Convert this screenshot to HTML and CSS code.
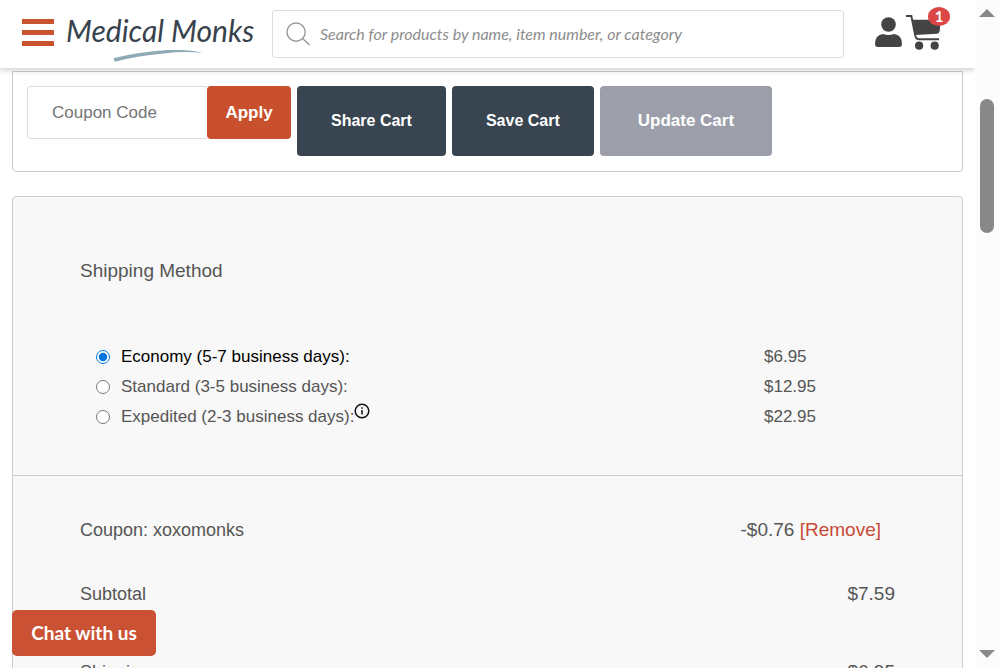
FILE: index.html
```html
<!DOCTYPE html>
<html lang="en">
<head>
<meta charset="utf-8">
<title>Cart - Medical Monks</title>
<link rel="stylesheet" href="styles.css">
</head>
<body>
<div class="page">
  <header class="header">
    <button class="menu" type="button" aria-label="Menu"><span></span><span></span><span></span></button>
    <a class="logo" href="#">
      <span class="logo-text">Medical Monks</span>
      <svg class="logo-swoosh" viewBox="0 0 90 12" aria-hidden="true"><path d="M0 8Q24 2 54 0Q74 -1 89 3Q70 1 50 3.500Q22 6 2 11.500Q-1 11 0 8Z"/></svg>
    </a>
    <form class="search">
      <svg viewBox="0 0 26 26" aria-hidden="true"><circle cx="10.5" cy="10.5" r="9.5"/><path d="M17 17l7.5 7"/></svg>
      <input type="search" aria-label="Search products" placeholder="Search for products by name, item number, or category">
    </form>
    <nav class="account">
      <a href="#" aria-label="Account"><svg class="user" viewBox="0 0 27 31"><circle cx="13.5" cy="7.5" r="7.3"/><path d="M8 17Q13.500 19 19 17Q27 18 27 27Q27 30 24 30H3Q0 30 0 27Q0 18 8 17Z"/></svg></a>
      <a class="cart" href="#" aria-label="Cart"><svg viewBox="0 0 36 36"><path class="line" d="M0 1H5.500L9.500 21Q10.500 25 13.500 25H34"/><path d="M7 5H36L34.500 17Q34 19 32 19.200L9.500 20.500Z"/><circle cx="13.500" cy="31.500" r="4.200"/><circle cx="29.500" cy="31.500" r="4.200"/></svg><span class="badge">1</span></a>
    </nav>
  </header>
  <main class="content">
    <section class="card actions">
      <form class="coupon">
        <input type="text" aria-label="Coupon Code" placeholder="Coupon Code">
        <button class="apply" type="button">Apply</button>
      </form>
      <button class="action" type="button">Share Cart</button>
      <button class="action" type="button">Save Cart</button>
      <button class="action update" type="button" disabled>Update Cart</button>
    </section>
    <section class="card totals">
      <div class="shipping">
        <h2>Shipping Method</h2>
        <ul class="methods">
          <li><input type="radio" name="ship" id="economy" checked><label for="economy">Economy (5-7 business days):</label><span class="price">$6.95</span></li>
          <li><input type="radio" name="ship" id="standard"><label for="standard">Standard (3-5 business days):</label><span class="price">$12.95</span></li>
          <li><input type="radio" name="ship" id="expedited"><label for="expedited">Expedited (2-3 business days):</label><svg class="info" viewBox="0 0 16 16" aria-hidden="true"><circle cx="8" cy="8" r="6.800"/><path d="M8 7V11.500M8 4.300V5.800"/></svg><span class="price">$22.95</span></li>
        </ul>
      </div>
      <dl class="summary">
        <div class="row discount"><dt>Coupon: xoxomonks</dt><dd>-$0.76 <a href="#">[Remove]</a></dd></div>
        <div class="row"><dt>Subtotal</dt><dd>$7.59</dd></div>
        <div class="row last"><dt>Shipping</dt><dd>$6.95</dd></div>
      </dl>
    </section>
  </main>
</div>
<div class="scrollbar" aria-hidden="true"><i class="up"></i><i class="thumb"></i><i class="down"></i></div>
<button class="chat" type="button">Chat with us</button>
</body>
</html>
```
FILE: styles.css
```css
* { box-sizing: border-box; }
body {
  margin: 0;
  height: 100vh;
  overflow: hidden;
  display: flex;
  background: #fff;
  color: #555;
  font: 18px/24px "Liberation Sans", sans-serif;
}
button, input { font: inherit; }
button { border: 0; cursor: pointer; }
a { color: inherit; text-decoration: none; }
.page { flex: 1; min-width: 0; overflow: hidden; }
.header {
  position: relative;
  z-index: 1;
  display: flex;
  align-items: center;
  height: 68px;
  padding: 0 24px 0 22px;
  background: #fff;
  box-shadow: 0 2px 6px rgba(0, 0, 0, .2);
}
.menu {
  display: flex;
  flex-direction: column;
  gap: 6px;
  width: 32px;
  padding: 0;
  margin: 0 12px 4px 0;
  background: none;
}
.menu span { height: 5px; background: #c9532f; }
.logo { position: relative; width: 206px; margin-bottom: 8px; color: #37424c; }
.logo-text { font: italic 30px/40px Lato, sans-serif; white-space: nowrap; }
.logo-swoosh { position: absolute; left: 48px; top: 40px; width: 90px; fill: #8eaab6; }
.search {
  flex: 1;
  display: flex;
  align-items: center;
  height: 48px;
  padding: 0 13px;
  gap: 9px;
  border: 1px solid #ddd;
  border-radius: 3px;
}
.search svg { width: 25px; flex: none; fill: none; stroke: #999; stroke-width: 1.5; }
.search input {
  flex: 1;
  min-width: 0;
  padding: 0;
  border: 0;
  outline: 0;
  background: none;
  font: italic 16px/24px Lato, sans-serif;
}
.search input::placeholder { color: #8c8c8c; opacity: 1; }
.account { display: flex; align-items: center; gap: 4px; margin: 0 1px 4px 31px; color: #444; }
.account a { display: block; }
.account svg { display: block; fill: currentColor; }
.user { width: 27px; }
.cart { position: relative; width: 44px; }
.cart svg { width: 35px; }
.cart .line { fill: none; stroke: currentColor; stroke-width: 2; }
.badge {
  position: absolute;
  right: 0;
  top: -8px;
  width: 22px;
  height: 19px;
  border-radius: 50%;
  background: #dc4646;
  color: #fff;
  font: bold 15px/19px Lato, sans-serif;
  text-align: center;
}
.content { padding: 3px 12px 0; }
.card { border: 1px solid #ccc; border-radius: 4px; }
.actions {
  display: flex;
  align-items: flex-start;
  gap: 6px;
  padding: 14px;
  height: 101px;
  border-radius: 0 0 4px 4px;
}
.coupon { display: flex; height: 53px; }
.coupon input {
  width: 180px;
  padding: 0 24px;
  border: 1px solid #ddd;
  border-right: 0;
  border-radius: 4px 0 0 4px;
  font-size: 17px;
}
.coupon input::placeholder { color: #757575; }
.apply, .action {
  border-radius: 4px;
  color: #fff;
  font: bold 17px/24px "Liberation Sans", sans-serif;
}
.apply { width: 84px; background: #c9502d; }
.action { height: 70px; padding: 0 34px; background: #38444f; font-size: 16px; }
.update { padding: 0 38px; background: #9c9faa; font-size: 17px; }
.totals { margin-top: 24px; background: #f8f8f8; }
.shipping { padding: 62px 67px 43px; border-bottom: 1px solid #ccc; }
h2 { margin: 0 0 59px; font: inherit; font-size: 19px; }
.methods { margin: 0; padding: 0 0 0 16px; list-style: none; font-size: 17px; }
.methods li { display: flex; align-items: center; height: 30px; }
.methods input { width: 14px; height: 14px; margin: 0 11px 0 0; accent-color: #0075e0; }
.methods input:checked + label { color: #000; }
.info { width: 16px; margin: -12px 0 0 0; fill: none; stroke: #111; stroke-width: 1.5; }
.price { width: 51px; margin: 0 80px 0 auto; }
.summary { margin: 0; padding: 22px 67px; height: 240px; }
.row { display: flex; justify-content: space-between; align-items: center; height: 64px; }
.row dd { margin: 0; font-size: 19px; }
.discount dd { margin-right: 14px; }
.discount a { color: #c74936; }
.last { height: 92px; }
.scrollbar {
  display: flex;
  flex-direction: column;
  align-items: center;
  width: 24px;
  padding: 9px 0 10px;
  background: #fcfcfc;
}
.up, .down { border: 8px solid transparent; }
.up { border-top: 0; border-bottom-color: #888; }
.down { border-bottom: 0; border-top-color: #888; margin-top: auto; }
.thumb { width: 14px; height: 134px; margin-top: 82px; border-radius: 7px; background: #888; }
.chat {
  position: fixed;
  z-index: 2;
  left: 12px;
  bottom: 12px;
  width: 144px;
  height: 46px;
  padding: 0;
  border-radius: 5px;
  background: #cb5135;
  color: #fff;
  font: bold 19px/24px Lato, sans-serif;
}
```
